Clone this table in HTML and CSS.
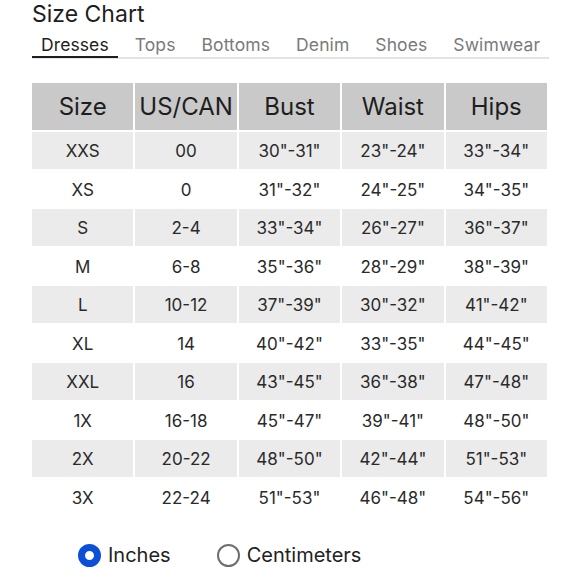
FILE: index.html
```html
<!DOCTYPE html>
<html>
<head>
<meta charset="utf-8">
<link rel="stylesheet" href="styles.css">
</head>
<body>
<div class="page">
  <h1 class="title">Size Chart</h1>
  <div class="tabs">
    <span class="tab active">Dresses</span>
    <span class="tab">Tops</span>
    <span class="tab">Bottoms</span>
    <span class="tab">Denim</span>
    <span class="tab">Shoes</span>
    <span class="tab">Swimwear</span>
  </div>
  <table class="chart">
    <thead>
      <tr><th>Size</th><th>US/CAN</th><th>Bust</th><th>Waist</th><th>Hips</th></tr>
    </thead>
    <tbody>
      <tr><td>XXS</td><td>00</td><td>30"-31"</td><td>23"-24"</td><td>33"-34"</td></tr>
      <tr><td>XS</td><td>0</td><td>31"-32"</td><td>24"-25"</td><td>34"-35"</td></tr>
      <tr><td>S</td><td>2-4</td><td>33"-34"</td><td>26"-27"</td><td>36"-37"</td></tr>
      <tr><td>M</td><td>6-8</td><td>35"-36"</td><td>28"-29"</td><td>38"-39"</td></tr>
      <tr><td>L</td><td>10-12</td><td>37"-39"</td><td>30"-32"</td><td>41"-42"</td></tr>
      <tr><td>XL</td><td>14</td><td>40"-42"</td><td>33"-35"</td><td>44"-45"</td></tr>
      <tr><td>XXL</td><td>16</td><td>43"-45"</td><td>36"-38"</td><td>47"-48"</td></tr>
      <tr><td>1X</td><td>16-18</td><td>45"-47"</td><td>39"-41"</td><td>48"-50"</td></tr>
      <tr><td>2X</td><td>20-22</td><td>48"-50"</td><td>42"-44"</td><td>51"-53"</td></tr>
      <tr><td>3X</td><td>22-24</td><td>51"-53"</td><td>46"-48"</td><td>54"-56"</td></tr>
    </tbody>
  </table>
  <div class="units">
    <label class="unit"><span class="radio checked"></span>Inches</label>
    <label class="unit"><span class="radio"></span>Centimeters</label>
  </div>
</div>
</body>
</html>
```
FILE: styles.css
```css
html, body {
  margin: 0;
  padding: 0;
  background: #fff;
}
body {
  font-family: Inter, "Liberation Sans", sans-serif;
  color: #222;
}
.page {
  width: 517px;
  padding-left: 32px;
}
.title {
  margin: 0;
  font-size: 23px;
  font-weight: 400;
  line-height: 28px;
  color: #1e1e1e;
}
.tabs {
  display: flex;
  gap: 8px;
  margin-top: 5px;
  border-bottom: 2px solid #e4e4e4;
}
.tab {
  font-size: 17.5px;
  line-height: 24px;
  padding: 0 9px 0 9px;
  color: #7a7a7a;
  letter-spacing: 0.1px;
}
.tab.active {
  color: #1e1e1e;
  box-shadow: inset 0 -2px 0 #1e1e1e;
  margin-bottom: -1px;
  padding-bottom: 1px;
}
.chart {
  margin-top: 22px;
  margin-left: -2px;
  border-collapse: separate;
  border-spacing: 2px;
  width: 519px;
  table-layout: fixed;
}
.chart th {
  background: #c9c9c9;
  height: 47px;
  padding: 0;
  font-size: 24px;
  font-weight: 400;
  color: #1e1e1e;
}
.chart td {
  height: 36.5px;
  padding: 2px 0 0 0;
  box-sizing: border-box;
  text-align: center;
  font-size: 17px;
  color: #2a2a2a;
}
.chart tbody tr:nth-child(odd) td {
  background: #ebebeb;
}
.units {
  display: flex;
  align-items: center;
  gap: 46px;
  margin-top: 26px;
  padding-left: 46px;
}
.unit {
  display: flex;
  align-items: center;
  gap: 7px;
  font-size: 20px;
  color: #222;
}
.radio {
  box-sizing: border-box;
  width: 23px;
  height: 23px;
  border-radius: 50%;
  border: 2px solid #6e6e6e;
  background: #fff;
}
.radio.checked {
  border: 7px solid #0b4fd8;
}
```
